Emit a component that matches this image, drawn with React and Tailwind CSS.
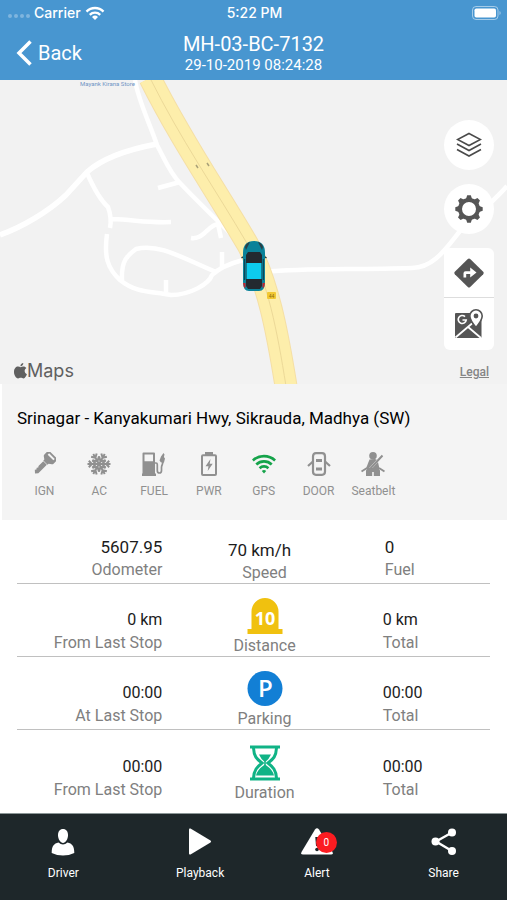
import React from 'react'

const Signal = () => (
  <svg className="h-3.5 w-5" viewBox="0 0 20 14" fill="none" stroke="currentColor" strokeWidth="2.4">
    <path d="M1.5 5.6a12 12 0 0 1 17 0" />
    <path d="M4.8 8.8a7.4 7.4 0 0 1 10.4 0" />
    <path d="M10 14l-3-3a4.3 4.3 0 0 1 6 0z" fill="currentColor" stroke="none" />
  </svg>
)

const Battery = () => (
  <svg className="h-3.5 w-[29px]" viewBox="0 0 29 14" fill="none">
    <rect x="0.5" y="0.5" width="25.5" height="13" rx="3.5" stroke="#fff" strokeOpacity="0.5" />
    <rect x="2.5" y="2.5" width="21.5" height="9" rx="1.8" fill="#fff" />
    <path d="M27.5 5a2.3 2.3 0 0 1 0 4z" fill="#fff" fillOpacity="0.5" />
  </svg>
)

const KeyIcon = () => (
  <svg className="size-6" viewBox="0 0 24 24" fill="currentColor">
    <g transform="rotate(45 12 12)">
      <path fillRule="evenodd" d="M7-1h10q1.500 0 1.500 1.500V5q0 1-.8 1.600L15 8.500V10H9V8.500L6.300 6.600Q5.500 6 5.500 5V.5Q5.500-1 7-1zM8 .8v2h8v-2z" />
      <path d="M9.500 10.500h5v12L12.300 25 9.500 22.500l1-1.300-1-1.300 1-1.300-1-1.300z" />
    </g>
  </svg>
)

const arm = 'M12 12V.5M8.800 1.800L12 4.800l3.200-3M8.200 5.400L12 9l3.800-3.600'
const SnowIcon = () => (
  <svg className="size-6" viewBox="0 0 24 24" fill="none" stroke="currentColor" strokeWidth="2">
    {[30, 90, 150, 210, 270, 330].map((deg) => (
      <path key={deg} d={arm} transform={`rotate(${deg} 12 12)`} />
    ))}
  </svg>
)

const FuelIcon = () => (
  <svg className="size-6" viewBox="0 0 24 24" fill="currentColor">
    <path fillRule="evenodd" d="M1.500.5h10.500q1 0 1 1V21.500H14V24H0v-2.500h.5V1.500q0-1 1-1zM2.500 2.500v6.700h8.500V2.500z" />
    <path d="M12.500 11h1.500q1.300 0 1.300 1.500v6q0 2.500 2.100 2.500t2.100-2.500v-3q0-1.600.8-3l.9-3.500" fill="none" stroke="currentColor" strokeWidth="1.700" />
    <path d="M21.500 1l1 1.500-.6 2.500 1.100 1.500-1 4h-3L17.500 8.500l1.500-4z" />
  </svg>
)

const PowerIcon = () => (
  <svg className="size-6" viewBox="0 0 24 24">
    <path d="M8 0h8v3H8z" fill="currentColor" />
    <rect x="5" y="3.200" width="14" height="19.800" rx="1" fill="none" stroke="currentColor" strokeWidth="2" />
    <path d="M13.500 7L8.500 14.200h3L10.700 19l5-7.200h-3z" fill="currentColor" />
  </svg>
)

const GpsIcon = () => (
  <svg className="size-6" viewBox="0 0 24 24" fill="none" stroke="#15a34a" strokeWidth="2.700">
    <path d="M.9 8.400a16.500 16.500 0 0 1 22.200 0" />
    <path d="M4.300 12.400a11.200 11.200 0 0 1 15.400 0" />
    <path d="M7.600 16.200a6.400 6.400 0 0 1 8.800 0" />
    <path d="M12 21.500l-2.200-2.400a3.200 3.200 0 0 1 4.400 0z" fill="#15a34a" stroke="none" />
  </svg>
)

const DoorIcon = () => (
  <svg className="size-6" viewBox="0 0 24 24" fill="none" stroke="currentColor" strokeWidth="2.200">
    <path d="M6 4.500Q6 1.200 9 1.200h6q3 0 3 3.300v15q0 3.300-3 3.300H9q-3 0-3-3.300z" />
    <path d="M9 8.500h6M9 17h6" strokeWidth="3" />
    <path d="M6 9.500l-5 4.500M18 9.500l5 4.500" />
  </svg>
)

const SeatbeltIcon = () => (
  <svg className="size-6" viewBox="0 0 24 24" fill="currentColor">
    <circle cx="12" cy="3.800" r="3.800" />
    <path d="M8.500 7.500L4.800 17h2.500l8.500-9.200-2-.8z" />
    <path d="M17 10l-6.500 7H18.500z" />
    <path d="M5 18.500L6.500 16h11l1.500 2.500V24h-6.200v-4h-1.600v4H5z" />
    <path d="M21.500 3.500L8 18M.5 19.500l5.500-3.500M23.500 19.500L18 16" fill="none" stroke="currentColor" strokeWidth="2" />
  </svg>
)

const LayersIcon = () => (
  <svg className="size-[26px]" viewBox="0 0 26 26" fill="none" stroke="#4a4a4a" strokeWidth="1.600">
    <path d="M13 1.500l11.500 6L13 13.500 1.500 7.500z" />
    <path d="M1 12l12 6.500L25 12M1 17.500L13 24l12-6.500" />
  </svg>
)

const GearIcon = () => (
  <svg className="size-7" viewBox="0 0 28 28" fill="#555">
    <circle cx="14" cy="14" r="9" fill="none" stroke="#555" strokeWidth="4" />
    {[0, 45, 90, 135, 180, 225, 270, 315].map((deg) => (
      <path key={deg} d="M12.200.3h3.600l1.600 4.700h-6.800z" transform={`rotate(${deg} 14 14)`} />
    ))}
  </svg>
)

const RouteIcon = () => (
  <svg className="size-[30px]" viewBox="0 0 30 30">
    <path d="M13.800.9q1.200-1 2.400 0l13 12.900q1 1.200 0 2.400l-13 12.900q-1.200 1-2.400 0L.8 16.200q-1-1.200 0-2.400z" fill="#555" />
    <path d="M9.500 19.500v-4.300q0-2 2-2h4.700V9.500l6.300 5-6.300 5v-3.600h-4v3.600z" fill="#fff" />
  </svg>
)

const GoogleMapIcon = () => (
  <svg className="size-[30px]" viewBox="0 0 30 30" fill="none">
    <rect x="1" y="4" width="26.500" height="25" rx="1" fill="#555" />
    <path d="M1.500 28.500L18 14.500M13.500 17.500L27 29" stroke="#fff" strokeWidth="1.800" />
    <path d="M11 7.600a4 4 0 1 0 1.200 3.400H8.500" stroke="#fff" strokeWidth="1.700" />
    <path d="M22 18.500q-6.200-7.500-6.200-11.500a6.200 6.200 0 0 1 12.400 0q0 4-6.200 11.500z" fill="#fff" stroke="#555" strokeWidth="1.600" />
    <circle cx="22" cy="7" r="2.400" fill="#555" />
  </svg>
)

const AppleIcon = () => (
  <svg className="h-4 w-[13px]" viewBox="0 0 13 16" fill="currentColor">
    <path d="M6.600 4.200C7.300 4 8.200 3.500 9.400 3.500c1.200 0 2.300.6 3 1.600-2.600 1.600-2.100 5 .5 6.100-.5 1.400-1.800 4.200-3.400 4.200-1 0-1.500-.6-2.700-.6s-1.800.6-2.700.6C1.900 15.400 0 12 0 9c0-3.400 2-5.400 4-5.400 1.100 0 1.900.5 2.600.6z" />
    <path d="M6.400 3.300C6.300 1.500 7.800.100 9.300 0c.2 1.800-1.300 3.300-2.900 3.300z" />
  </svg>
)

const RoadMap = () => (
  <svg className="absolute inset-0 h-full w-full" viewBox="0 0 507 304" preserveAspectRatio="xMidYMid slice" fill="none" strokeLinejoin="round">
    <g stroke="#fff" strokeWidth="4.500">
      <path d="M0 155C22 147 48 132 66 115L87 92C104 77 130 69 157 64" strokeWidth="5.500" />
      <path d="M135 0C138 20 150 44 157 65C165 80 170 93 180 103C198 122 216 139 231 154" />
      <path d="M158 108L180 102M87 93Q98 118 108 127Q112 138 110 148M112 139C136 140 148 143 171 142" />
      <path d="M107 154C104 176 107 188 120 200C136 213 150 211 171 215C190 215 209 204 212 195C219 188 228 184 243 180" />
      <path d="M122 200C121 180 128 175 136 169C160 163 184 179 216 192" />
      <path d="M166 212v-12M222 189v-17M191 158C204 160 208 145 218 144L221 158" />
      <path d="M265 192C304 188 350 190 412 188C434 188 447 167 460 151C478 134 494 121 507 106" />
    </g>
    <path d="M150 -2C181 60 214 107 248 165C268 203 277 250 286 306" stroke="#f5dfa5" strokeWidth="23" />
    <path d="M150 -2C181 60 214 107 248 165C268 203 277 250 286 306" stroke="#fdeeab" strokeWidth="21" />
    <path d="M150 -2C181 60 214 107 248 165C268 203 277 250 286 306" stroke="#ecd998" strokeWidth="1" />
    <path d="M196 85l2 3M207 83l2 3" stroke="#a9a078" strokeWidth="1.500" />
    <rect x="267" y="212" width="9" height="7" rx="1" fill="#f2c832" />
    <text x="271.500" y="218" textAnchor="middle" className="fill-[#8a6a10] font-['Roboto'] text-[5px]">44</text>
    <text x="80" y="6" className="fill-[#6f94c4] font-['Roboto'] text-[6px]">Mayank Kirana Store</text>
    <g transform="translate(242 161)">
      <path d="M-.5 17l4.500-3M24.500 17l-4.500-3" stroke="#23343a" strokeWidth="1.500" />
      <path d="M1 12Q1 0 12 0t11 12v29q0 9-6 9H7q-6 0-6-9z" fill="#0a8299" />
      <path d="M3 6Q4 2 8 1L4 9zM21 6Q20 2 16 1l4 8z" fill="#2b4047" />
      <path d="M4 14l2-3h12l2 3v31l-2 3H6l-2-3z" fill="#23292f" />
      <path d="M4.500 22h15v16h-15z" fill="#0dcbed" />
      <path d="M2.700 18v21M21.300 18v21" stroke="#103a48" />
      <path d="M1 42h2.500v4.500H2zM23 42h-2.500v4.500H22z" fill="#c4242e" />
    </g>
  </svg>
)

const DistanceIcon = () => (
  <svg className="size-9" viewBox="0 0 36 36">
    <path d="M4.500 31V13.500a13.500 13.500 0 0 1 27 0V31H35.500v5H.5v-5z" fill="#f0c10f" />
    <text x="18" y="27" textAnchor="middle" fill="#fff" className="font-['Open_Sans'] text-[18px] font-bold">10</text>
  </svg>
)

const ParkingIcon = () => (
  <svg className="size-9" viewBox="0 0 36 36">
    <circle cx="18" cy="17.500" r="17.500" fill="#127fd5" />
    <text x="18.500" y="26" textAnchor="middle" fill="#fff" className="font-['Open_Sans'] text-[24px] font-semibold">P</text>
  </svg>
)

const DurationIcon = () => (
  <svg className="size-9" viewBox="0 0 36 36" fill="none" stroke="#10b386">
    <path d="M3 2h30M3 34h30" strokeWidth="3" />
    <path d="M6.500 3C7 12 10 14 15 18C10 22 7 25 6.500 33M29.500 3C29 12 26 14 21 18C26 22 29 25 29.500 33" strokeWidth="3" />
    <path d="M12 9.500h12Q22 14 18.800 16.500V20Q26 25 27 30.500H9Q10 25 17.200 20v-3.500Q14 14 12 9.500z" fill="#10b386" stroke="none" />
  </svg>
)

const DriverIcon = () => (
  <svg className="size-7" viewBox="0 0 28 28" fill="currentColor">
    <path d="M14 1c3.200 0 5 2.400 5 6.200S16.500 15 14 15s-5-4-5-7.800S10.800 1 14 1z" />
    <path d="M9.500 14.500Q14 18.500 18.500 14.500C23 15.500 25.300 18 25.300 25Q20 27.500 14 27.500T2.700 25C2.700 18 5 15.500 9.500 14.500z" />
  </svg>
)

const PlayIcon = () => (
  <svg className="size-7" viewBox="0 0 28 28" fill="currentColor">
    <path d="M3 1.500Q3 0 4.500.6L24.500 12.500q1.200 1 0 2L4.500 26.400Q3 27 3 25.500z" />
  </svg>
)

const AlertIcon = () => (
  <svg className="h-7 w-8" viewBox="0 0 32 28">
    <path d="M14 1.500q2-2.500 4 0l13.500 22.500q1 2.500-1.500 2.500H2Q-.5 26.500.5 24z" fill="currentColor" />
    <path d="M14.300 9h3.400l-.7 9h-2z" fill="#1e272a" />
    <circle cx="16" cy="21.500" r="1.800" fill="#1e272a" />
  </svg>
)

const ShareIcon = () => (
  <svg className="size-7" viewBox="0 0 28 28" fill="currentColor">
    <path d="M22 4.500L6 13.500l16 9.500" fill="none" stroke="currentColor" strokeWidth="2.400" />
    <circle cx="22" cy="4.500" r="4" />
    <circle cx="5.500" cy="13.500" r="4" />
    <circle cx="22" cy="23" r="4" />
  </svg>
)

const sensors = [
  { label: 'IGN', Icon: KeyIcon },
  { label: 'AC', Icon: SnowIcon },
  { label: 'FUEL', Icon: FuelIcon },
  { label: 'PWR', Icon: PowerIcon },
  { label: 'GPS', Icon: GpsIcon },
  { label: 'DOOR', Icon: DoorIcon },
  { label: 'Seatbelt', Icon: SeatbeltIcon },
]

const stats = [
  { left: '0 km', leftLabel: 'From Last Stop', Icon: DistanceIcon, label: 'Distance', right: '0 km' },
  { left: '00:00', leftLabel: 'At Last Stop', Icon: ParkingIcon, label: 'Parking', right: '00:00' },
  { left: '00:00', leftLabel: 'From Last Stop', Icon: DurationIcon, label: 'Duration', right: '00:00' },
]

function Stat({ value, label, className = '', valueClass = '' }) {
  return (
    <div className={className}>
      <p className={`leading-[26px] text-[#1c1c1c] ${valueClass}`}>{value}</p>
      <p className="text-base leading-5 text-[#808080]">{label}</p>
    </div>
  )
}

function App() {
  return (
    <div className="flex min-h-screen flex-col bg-white font-['Roboto',sans-serif]">
      <header className="bg-[#4896d0] pb-1.5 text-white">
        <div className="grid grid-cols-3 items-center px-2 pr-1.5 font-['Inter',sans-serif] text-sm leading-[26px] font-medium">
          <div className="flex items-center gap-1">
            <span className="flex gap-0.5 pt-1.5">
              {[1, 2, 3, 4].map((n) => (
                <i key={n} className="size-1 rounded-full bg-white/30" />
              ))}
            </span>
            <span>Carrier</span>
            <Signal />
          </div>
          <span className="text-center">5:22 PM</span>
          <span className="flex justify-end">
            <Battery />
          </span>
        </div>
        <div className="grid grid-cols-[1fr_auto_1fr] items-center px-4 pt-1.5">
          <button className="flex items-center gap-1.5 justify-self-start text-xl">
            <svg className="h-[26px] w-4" viewBox="0 0 16 26" fill="none" stroke="currentColor" strokeWidth="3.500">
              <path d="M14.500 1.500L3 13l11.500 11.500" />
            </svg>
            Back
          </button>
          <div className="text-center">
            <h1 className="text-xl leading-6">MH-03-BC-7132</h1>
            <p className="text-[15px] leading-[18px]">29-10-2019 08:24:28</p>
          </div>
        </div>
      </header>

      <section className="relative h-[304px] overflow-hidden bg-[#f2f2f2]">
        <RoadMap />
        <div className="absolute top-10 right-[13px] flex flex-col items-center">
          <button aria-label="Map layers" className="grid size-[50px] place-items-center rounded-full bg-white">
            <LayersIcon />
          </button>
          <button aria-label="Settings" className="mt-3.5 grid size-[50px] place-items-center rounded-full bg-white">
            <GearIcon />
          </button>
          <div className="mt-3.5 divide-y divide-[#ddd] rounded-md bg-white">
            <button aria-label="Directions" className="grid h-[50px] w-[50px] place-items-center">
              <RouteIcon />
            </button>
            <button aria-label="Google map" className="grid h-[52px] w-[50px] place-items-center">
              <GoogleMapIcon />
            </button>
          </div>
        </div>
        <div className="absolute bottom-0 left-3.5 flex items-center text-[#606060]">
          <AppleIcon />
          <span className="font-['Inter',sans-serif] text-lg leading-[26px]">Maps</span>
        </div>
        <a href="#legal" className="absolute right-[18px] bottom-1 text-xs leading-4 font-medium text-[#858585] underline">
          Legal
        </a>
      </section>

      <section className="border-l-2 border-white bg-[#f4f4f4] pb-5">
        <p className="px-[15px] pt-5 text-[17px] leading-7 text-black">Srinagar - Kanyakumari Hwy, Sikrauda, Madhya (SW)</p>
        <ul className="mx-[15px] mt-5 grid w-[76%] grid-cols-7 text-[#909090]">
          {sensors.map(({ label, Icon }) => (
            <li key={label} className="flex flex-col items-center gap-1.5">
              <Icon />
              <span className="text-xs leading-[18px]">{label}</span>
            </li>
          ))}
        </ul>
      </section>

      <section className="px-[17px] pb-2.5">
        <div className="grid h-16 grid-cols-[145fr_204fr_123fr] items-end border-b border-[#c0c0c0] text-[17px]">
          <Stat value="5607.95" label="Odometer" className="pb-[3px] text-right" />
          <Stat value="70 km/h" label="Speed" className="text-center" valueClass="pr-2.5" />
          <Stat value="0" label="Fuel" className="pb-[3px] pl-[18px]" />
        </div>
        {stats.map(({ left, leftLabel, Icon, label, right }) => (
          <div key={label} className="grid h-[73px] grid-cols-[145fr_204fr_123fr] items-end border-[#c0c0c0] not-last:border-b">
            <Stat value={left} label={leftLabel} className="pb-[3px] text-right" />
            <div className="flex flex-col items-center gap-0.5">
              <Icon />
              <span className="leading-5 text-[#808080]">{label}</span>
            </div>
            <Stat value={right} label="Total" className="pb-[3px] pl-4" />
          </div>
        ))}
      </section>

      <nav className="grid flex-1 grid-cols-4 items-start border-t border-[#8b9696] bg-[#1e272a] pt-3.5 text-xs leading-[18px] text-white">
        <button className="flex flex-col items-center gap-2">
          <DriverIcon />
          Driver
        </button>
        <button className="flex flex-col items-center gap-2 pl-5">
          <PlayIcon />
          Playback
        </button>
        <button className="flex flex-col items-center gap-2">
          <span className="relative">
            <AlertIcon />
            <span className="absolute top-1 -right-1 grid size-[21px] place-items-center rounded-full bg-[#fb1c21] text-[10px] text-white">0</span>
          </span>
          Alert
        </button>
        <button className="flex flex-col items-center gap-2">
          <ShareIcon />
          Share
        </button>
      </nav>
    </div>
  )
}

export default App
